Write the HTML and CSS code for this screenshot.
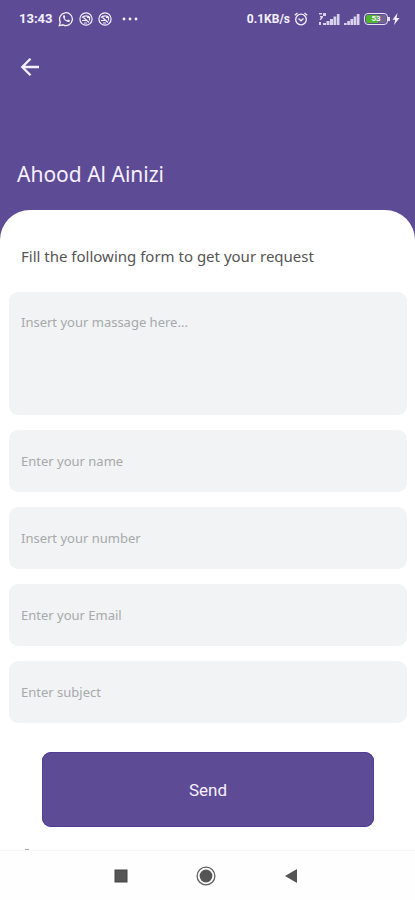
FILE: index.html
```html
<!DOCTYPE html>
<html lang="en">
<head>
<meta charset="utf-8">
<meta name="viewport" content="width=device-width, initial-scale=1">
<title>Ahood Al Ainizi</title>
<link rel="stylesheet" href="styles.css">
</head>
<body>
<div class="screen">
  <div class="statusbar">
    <div class="status-left">
      <span>13:43</span>
      <svg width="16" height="16" viewBox="0 0 16 16" fill="none" stroke="currentColor" stroke-width="1.3"><path d="M1.3 14.7l1-3.6A6.4 6.4 0 1 1 5 13.8z"/><path d="M5.4 4.3c-1.6 2.300 2.700 7.400 5.700 6.600 1-.4 1-1.300.6-1.600L10 8.500l-.9.9C8 9 7 8 6.600 6.900l.7-.9-.7-1.700z" fill="currentColor" stroke="none"/></svg>
      <svg width="14" height="14" viewBox="0 0 14 14" fill="none" stroke="currentColor" stroke-width="1.200"><circle cx="7" cy="7" r="6.100"/><path d="M3 5.500c2-2.300 6-2.300 8 0M4.500 5.500l5.500 5M3 8.500h4M5 11h3M8 5.500h2.500v3"/></svg>
      <svg width="14" height="14" viewBox="0 0 14 14" fill="none" stroke="currentColor" stroke-width="1.200"><circle cx="7" cy="7" r="6.100"/><path d="M3 5.500c2-2.300 6-2.300 8 0M4.500 5.500l5.500 5M3 8.500h4M5 11h3M8 5.500h2.500v3"/></svg>
      <svg class="more" width="16" height="4" viewBox="0 0 16 4" fill="currentColor"><circle cx="2" cy="2" r="1.400"/><circle cx="8" cy="2" r="1.400"/><circle cx="14" cy="2" r="1.400"/></svg>
    </div>
    <div class="status-right">
      <span>0.1KB/s</span>
      <svg width="14" height="14" viewBox="0 0 14 14" fill="none" stroke="currentColor" stroke-width="1.300"><circle cx="7" cy="7.500" r="5.300"/><path d="M.8 3.200L3.500 1M13.200 3.200L10.500 1M4.500 6.500L7 8.800l2.500-2.300"/></svg>
      <svg class="signal" width="22" height="14" viewBox="0 0 22 14" fill="currentColor"><path d="M1 1h3v1.500H1zM5 1h3v3H5zM2 4h3v1.500L3 8H1.500L3 5.500H2zM1 10h2v3H1zM5 11h3v2H5zM8.500 9h3v4h-3zM12 7h3v6h-3zM15.500 4.500h2.800V13h-2.800zM18.900 2h2.600v11h-2.600z" opacity=".82"/></svg>
      <svg width="16" height="14" viewBox="0 0 16 14" fill="currentColor"><path d="M0 11h2.700v2H0zM3.200 9h2.700v4H3.200zM6.400 7h2.700v6H6.400zM9.600 4.500h2.700V13H9.600zM12.800 2h2.700v11h-2.700z" opacity=".82"/></svg>
      <span class="battery"><span class="battery-level">53</span></span>
      <svg width="8" height="12" viewBox="0 0 8 12" fill="currentColor"><path d="M5.500 0L.5 6.800h2.700L2 12l5.500-7H4.600z"/></svg>
    </div>
  </div>

  <header class="header">
    <button class="back" type="button" aria-label="Back">
      <svg width="20" height="20" viewBox="0 0 20 20" fill="none" stroke="currentColor" stroke-width="2.300"><path d="M19 10H3M10.500 1.800L2.300 10l8.200 8.200"/></svg>
    </button>
    <h1 class="title">Ahood Al Ainizi</h1>
  </header>

  <main class="sheet">
    <h2 class="intro">Fill the following form to get your request</h2>
    <form class="form">
      <textarea class="field message" aria-label="Message" placeholder="Insert your massage here..."></textarea>
      <input class="field" type="text" aria-label="Name" placeholder="Enter your name">
      <input class="field" type="tel" aria-label="Number" placeholder="Insert your number">
      <input class="field" type="email" aria-label="Email" placeholder="Enter your Email">
      <input class="field" type="text" aria-label="Subject" placeholder="Enter subject">
      <button class="send" type="button">Send</button>
    </form>
    <span class="peek"></span>
  </main>

  <nav class="navbar">
    <button class="nav-button" type="button" aria-label="Recent apps"><svg width="20" height="20" viewBox="0 0 20 20"><rect x="4" y="4" width="12" height="12" fill="#565656" stroke="#444"/></svg></button>
    <button class="nav-button" type="button" aria-label="Home"><svg width="20" height="20" viewBox="0 0 20 20"><circle cx="10" cy="10" r="8.900" fill="none" stroke="#606060" stroke-width="1.300"/><circle cx="10" cy="10" r="6.400" fill="#555"/></svg></button>
    <button class="nav-button" type="button" aria-label="Back"><svg width="20" height="20" viewBox="0 0 20 20"><path d="M4 10l12-7v14z" fill="#555"/></svg></button>
  </nav>
</div>
</body>
</html>
```
FILE: styles.css
```css
* { box-sizing: border-box; }

body {
  margin: 0;
  background: #5d4b96;
  font-family: "Noto Sans", sans-serif;
}

button {
  border: 0;
  padding: 0;
  background: none;
  color: inherit;
}

svg { display: block; flex: none; }

.screen {
  display: flex;
  flex-direction: column;
  min-height: 100vh;
  color: #f5f0ff;
}

.statusbar {
  display: flex;
  justify-content: space-between;
  align-items: center;
  height: 38px;
  padding: 0 15px 0 19px;
  font: 700 13px/16px Roboto, sans-serif;
}

.status-left, .status-right {
  display: flex;
  align-items: center;
}

.status-left { gap: 5px; }
.status-right { gap: 4px; font-size: 12px; }
.more { margin-left: 5px; }
.signal { margin-left: 6px; }

.battery {
  position: relative;
  width: 24px;
  height: 12px;
  padding: 1px;
  border: 1px solid #e9e2f5;
  border-radius: 4px;
}

.battery::after {
  content: "";
  position: absolute;
  right: -3px;
  top: 3px;
  width: 2px;
  height: 4px;
  background: #e9e2f5;
}

.battery-level {
  display: block;
  border-radius: 2px;
  background: linear-gradient(90deg, #4fb52f 58%, #73658f 58%);
  font-size: 8px;
  line-height: 8px;
  text-align: center;
}

.header {
  display: flex;
  flex-direction: column;
  justify-content: space-between;
  align-items: flex-start;
  height: 172px;
  padding: 19px 17px 20px;
}

.back { padding: 0 3px; }

.title {
  margin: 0;
  font-size: 21px;
  line-height: 32px;
  font-weight: 400;
}

.sheet {
  display: flex;
  flex: 1;
  flex-direction: column;
  padding: 34px 8px 0 9px;
  border-radius: 30px 30px 0 0;
  background: #fff;
}

.intro {
  margin: 0 12px 24px;
  color: #555;
  font-size: 15px;
  line-height: 24px;
  font-weight: 400;
}

.form {
  display: flex;
  flex-direction: column;
  gap: 15px;
}

.field {
  width: 100%;
  height: 62px;
  padding: 0 12px;
  border: 0;
  border-radius: 9px;
  background: #f1f3f5;
  color: #555;
  font: 400 13px/20px "Noto Sans", sans-serif;
}

.message {
  height: 123px;
  padding-top: 20px;
  resize: none;
}

.field::placeholder { color: #a8a9ab; opacity: 1; }

.send {
  height: 75px;
  margin: 14px 33px 0;
  border-radius: 9px;
  background: #5d4b96;
  box-shadow: inset 0 0 0 1px #513d91;
  color: #f5f0ff;
  font: 400 17px/24px Roboto, sans-serif;
}

.peek {
  width: 4px;
  height: 1px;
  margin: auto 16px 0;
  background: #aaa;
}

.navbar {
  display: flex;
  justify-content: center;
  gap: 65px;
  height: 50px;
  padding-right: 3px;
  border-top: 1px solid #f6f6f6;
  background: #fefefe;
}

.nav-button {
  display: grid;
  place-items: center;
  width: 20px;
}
```
